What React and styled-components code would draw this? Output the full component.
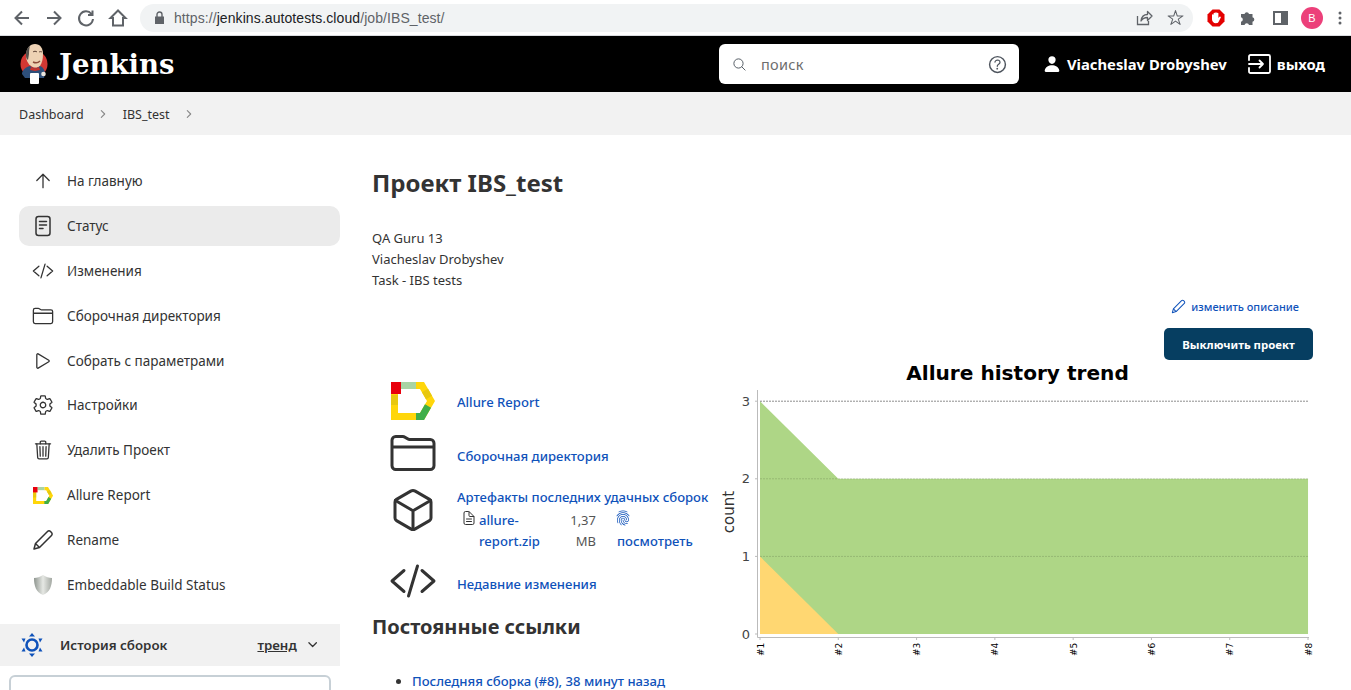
import styled, { createGlobalStyle } from "styled-components";
import {
  IoArrowUpOutline,
  IoChevronDown,
  IoChevronForward,
  IoCodeSlashOutline,
  IoCubeOutline,
  IoDocumentTextOutline,
  IoFingerPrintOutline,
  IoFolderOutline,
  IoHelpCircleOutline,
  IoPerson,
  IoPlayOutline,
  IoSearchOutline,
  IoSettingsOutline,
  IoStarOutline,
  IoTrashOutline,
} from "react-icons/io5";

const GlobalStyle = createGlobalStyle`
  html, body {
    margin: 0;
    padding: 0;
    height: 100%;
    overflow: hidden;
    background: #fff;
  }
  body {
    font-family: "Noto Sans", "Open Sans", sans-serif;
    font-size: 13px;
    color: #333;
  }
  * { box-sizing: border-box; }
`;

const Page = styled.div`
  height: 690px;
  overflow: hidden;
`;

/* browser chrome */
const Toolbar = styled.div`
  height: 36px;
  display: flex;
  align-items: center;
  padding-left: 12px;
  border-bottom: 1px solid #dadce0;
  color: #5f6368;
`;

const NavGroup = styled.div`
  display: flex;
  align-items: center;
  gap: 12px;
  width: 128px;

  svg { display: block; }
`;

const Omnibox = styled.div`
  flex: 1;
  height: 28px;
  border-radius: 14px;
  background: #f1f3f4;
  display: flex;
  align-items: center;
  padding: 0 9px 0 14px;
  margin-right: 7px;
  gap: 9px;
  font-family: "Liberation Sans", sans-serif;
  font-size: 14px;
`;

const Url = styled.span`
  flex: 1;
  color: #5f6368;
  letter-spacing: 0.08px;
  b { font-weight: 400; color: #202124; }
`;

const OmniIcons = styled.div`
  display: flex;
  align-items: center;
  gap: 14px;
  font-size: 17px;
  svg { display: block; }
`;

const ExtIcons = styled.div`
  display: grid;
  grid-template-columns: repeat(4, 32px) 23px;
  align-items: center;
  justify-items: center;
  svg { display: block; }
`;

const Avatar = styled.div`
  width: 22px;
  height: 22px;
  border-radius: 50%;
  background: #ec407a;
  color: #fff;
  font-family: "Liberation Sans", sans-serif;
  font-size: 11px;
  display: flex;
  align-items: center;
  justify-content: center;
`;

/* jenkins header */
const Header = styled.header`
  height: 56px;
  background: #000;
  display: flex;
  align-items: center;
  color: #fff;
  padding: 0 26px 0 19px;
`;

const Brand = styled.div`
  display: flex;
  align-items: center;
  gap: 10px;
  flex: 1;
  font-family: "DejaVu Serif", serif;
  font-weight: 700;
  font-size: 27.5px;
`;

const SearchBox = styled.div`
  width: 300px;
  height: 40px;
  border-radius: 6px;
  background: #fff;
  display: flex;
  align-items: center;
  padding: 0 10px 0 13px;
  color: #4d545d;
  margin-right: 24px;
  font-size: 14.5px;

  span {
    flex: 1;
    margin-left: 14px;
    color: #6d6d6d;
    letter-spacing: 0.3px;
  }
`;

const HeaderLink = styled.div`
  display: flex;
  align-items: center;
  gap: 6px;
  font-weight: 700;
  font-size: 14.8px;
  margin-right: ${(p) => p.$mr || 0}px;
  white-space: nowrap;
`;

const Crumbs = styled.nav`
  height: 43px;
  background: #f2f2f2;
  display: flex;
  align-items: center;
  padding: 1px 0 0 19px;
  font-size: 12.5px;
  color: #333;

  svg {
    margin: 0 14px 0 13px;
    color: #8a8a8a;
    font-size: 12px;
  }
`;

const Body = styled.div`
  display: flex;
`;

/* left column */
const Side = styled.aside`
  width: 340px;
  flex: none;
  padding-top: 26px;
`;

const Tasks = styled.div`
  margin: 0 0 19px 19px;
`;

const Task = styled.div`
  height: 40px;
  margin-bottom: 4.9px;
  border-radius: 10px;
  background: ${(p) => (p.$active ? "#ebebeb" : "transparent")};
  display: flex;
  align-items: center;
  font-size: 13.5px;
  color: #333;
`;

const TaskIcon = styled.span`
  width: 48px;
  flex: none;
  display: flex;
  justify-content: center;
  font-size: 22px;
  color: #333;

  svg { display: block; }
  ${(p) => p.$thin && "svg path, svg line, svg polyline, svg circle { stroke-width: 30; }"}
`;

const HistoryHead = styled.div`
  height: 42px;
  background: #f1f1f1;
  display: flex;
  align-items: center;
  padding: 0 21px 0 20px;
  font-size: 13.3px;

  strong {
    flex: 1;
    margin-left: 16px;
    font-weight: 600;
  }

  u {
    font-weight: 600;
    margin-right: 9px;
  }
`;

const Filter = styled.div`
  margin: 9px 9px 0;
  height: 40px;
  border: 2px solid #c7d0d6;
  border-radius: 6px;
  display: flex;
  align-items: center;
  padding: 0 7px;
  gap: 7px;
  color: #777;
  font-size: 13px;
`;

/* main */
const Main = styled.main`
  flex: 1;
  padding: 0 38px 0 32px;
  min-width: 0;
`;

const Title = styled.h1`
  margin: 30px 0 0;
  font-size: 24px;
  line-height: 36px;
  font-weight: 700;
  color: #333;
`;

const Description = styled.div`
  margin-top: 27px;
  line-height: 21px;
  font-size: 13px;
`;

const EditRow = styled.div`
  display: flex;
  justify-content: flex-end;
  align-items: center;
  gap: 5px;
  padding-right: 14px;
  margin-top: 5px;
  height: 21px;
  font-size: 11px;
  font-weight: 500;
  color: #0f52ba;
`;

const DisableRow = styled.div`
  display: flex;
  justify-content: flex-end;
  margin-top: 11px;
`;

const DisableButton = styled.button`
  width: 149px;
  height: 32px;
  border: none;
  border-radius: 5px;
  background: #063e61;
  color: #fff;
  font-family: inherit;
  font-size: 11.4px;
  font-weight: 700;
`;

const Columns = styled.div`
  display: flex;
`;

const Links = styled.div`
  width: 343px;
  flex: none;
  padding-top: 18px;
`;

const LinkRow = styled.div`
  display: grid;
  grid-template-columns: 48px 1fr;
  column-gap: 19px;
  margin-left: 18px;
  height: ${(p) => p.$h}px;
`;

const LinkIcon = styled.div`
  font-size: 48px;
  line-height: 0;
  color: #333;
  margin: ${(p) => p.$top || 0}px 0 0 ${(p) => p.$left || 0}px;
  svg { display: block; }
`;

const BlueLink = styled.a`
  color: #0f52ba;
  font-weight: 500;
  font-size: 13.1px;
  white-space: nowrap;
`;

const LinkText = styled.div`
  padding-top: ${(p) => p.$top}px;
  line-height: 21px;
`;

const Artifact = styled.div`
  display: grid;
  grid-template-columns: 22px 71px 46px 1fr;
  margin-top: 2px;
  line-height: 21px;
  font-size: 13px;
`;

const ArtifactIcon = styled.div`
  font-size: ${(p) => p.$size}px;
  padding-left: ${(p) => p.$left || 0}px;
  height: 21px;
  line-height: 0;
  color: ${(p) => p.$color || "#333"};
`;

const Size = styled.div`
  text-align: right;
  color: #555;
`;

const ViewLink = styled(BlueLink)`
  display: block;
  padding-left: 21px;
`;

const SubTitle = styled.h2`
  margin: 0;
  font-size: 20px;
  line-height: 30px;
  font-weight: 700;
  color: #333;
`;

const PermaList = styled.ul`
  margin: 29px 0 0;
  padding-left: 40px;
  line-height: 21px;
`;

/* drawings */
const Butler = () => (
  <svg width="30" height="40" viewBox="0 0 30 40">
    <circle cx="15" cy="20" r="13.5" fill="#d33833" />
    <path d="M7 12C7 4 11 0 16 0c5 0 8 4 8 10 0 5-1 9-3 12-2 2-6 2-9 0-3-2-5-6-5-10z" fill="#eed2b4" />
    <path d="M7 12C7 7 8 4 11 2c-1 3-1 6-1 8l-1 6c-1-1-2-2-2-4z" fill="#55504c" />
    <path d="M14 8c1-1 3-1 4 0M20 8c1-.5 2-.5 3 0" stroke="#5a4033" strokeWidth="1" fill="none" />
    <path d="M14 18c2 1 5 1 7-1" stroke="#8b4b3a" strokeWidth="1.4" fill="none" />
    <path d="M3 30c0-3 3-7 8-8l5 3 5-3c3 1 5 4 5 8l-1 4H6z" fill="#2e4f7a" />
    <path d="M12 23l4 2 4-2 1 3-5 1-5-1z" fill="#c8322d" />
    <circle cx="24.5" cy="30" r="2.3" fill="#e9e4dc" />
    <rect x="11" y="29" width="9" height="11" rx="1" fill="#fff" />
  </svg>
);

const AllureLogo = ({ width }) => (
  <svg width={width} viewBox="0 0 44 38" fill="none" strokeWidth="7" style={{ display: "block" }}>
    <path d="M3.5 4V34.5H31L40 19L31 3.5H25" stroke="#ffd60a" />
    <path d="M10 3.5H25" stroke="#a9d4a4" />
    <path d="M34 8.600L38 15.500" stroke="#e8c80f" />
    <path d="M37 24L31 34.500H25" stroke="#3fae49" />
    <path d="M3.500 13V23" stroke="#e8c80f" />
    <rect width="10" height="12" fill="#e8000d" stroke="none" />
  </svg>
);

const StatusIcon = () => (
  <svg width="22" height="22" viewBox="0 0 22 22" fill="none" stroke="#333" strokeWidth="1.5" strokeLinecap="round">
    <rect x="4" y="1.5" width="14" height="19" rx="2.5" />
    <path d="M7.500 6.500h7M7.500 10h7M7.500 13.500h3.500" />
  </svg>
);

const ShieldIcon = () => (
  <svg width="22" height="22" viewBox="0 0 22 22">
    <defs>
      <linearGradient id="shield" x1="0" x2="1" y1="0" y2="0">
        <stop offset="0" stopColor="#8f9690" />
        <stop offset="0.5" stopColor="#e6e8e4" />
        <stop offset="1" stopColor="#a3a8a2" />
      </linearGradient>
    </defs>
    <path d="M11 1c3 2 6 3 9 3 0 8-2 14-9 17C4 18 2 12 2 4c3 0 6-1 9-3z" fill="url(#shield)" />
  </svg>
);

const PencilIcon = ({ size, color }) => (
  <svg width={size} height={size} viewBox="0 0 22 22" fill="none" stroke={color} strokeLinejoin="round" strokeWidth="1.5">
    <path d="M2 20l1.500-5.500L15.500 2.500a2.100 2.100 0 0 1 3 0l1 1a2.100 2.100 0 0 1 0 3L7.500 18.500z" />
    <path d="M3.500 14.500l4 4" />
  </svg>
);

const HistoryIcon = () => (
  <svg width="24" height="24" viewBox="0 0 24 24" fill="#0f52ba">
    <circle cx="12" cy="12" r="5.5" fill="none" stroke="#0f52ba" strokeWidth="2.6" />
    <path d="M12 0l3 3.500H9zM12 24l-3-3.500h6zM1.500 5.500h4l-1.500 4zM22.500 5.500h-4l1.500 4zM1.500 18.500h4l-1.500-4zM22.500 18.500h-4l1.500-4z" />
  </svg>
);

const LogoutIcon = () => (
  <svg width="23" height="20" viewBox="0 0 23 20" fill="none" stroke="#fff" strokeWidth="1.8" strokeLinecap="round" strokeLinejoin="round">
    <path d="M1 6V2.500A1.500 1.500 0 0 1 2.500 1h18A1.500 1.500 0 0 1 22 2.500v15a1.500 1.500 0 0 1-1.500 1.500h-18A1.500 1.500 0 0 1 1 17.500V14" />
    <path d="M1 10h14M11.500 6.500L15 10l-3.500 3.500" />
  </svg>
);

const NavIcon = ({ d }) => (
  <svg width="20" height="20" viewBox="0 0 20 20" fill="none" stroke="#5f6368" strokeWidth="2">
    <path d={d} />
  </svg>
);

const ShareIcon = () => (
  <svg width="17" height="17" viewBox="0 0 17 17" fill="none" stroke="#5f6368" strokeWidth="1.3">
    <path d="M1.500 7v8.500h11V12" />
    <path d="M5 12c.5-4 3-6.500 6.500-6.500V2.500L16 7l-4.500 4.500V8.500C9 8.500 6.500 9.500 5 12z" strokeLinejoin="round" />
  </svg>
);

const StopIcon = () => (
  <svg width="18" height="18" viewBox="0 0 18 18">
    <path d="M5.500 .5h7l5 5v7l-5 5h-7l-5-5v-7z" fill="#e40000" />
    <path d="M5 9V6a.8.8 0 0 1 1.600 0V4.500a.8.8 0 0 1 1.600 0V4a.8.8 0 0 1 1.600 0v.5a.8.8 0 0 1 1.600 0V9l1-1.200a.8.8 0 0 1 1.300 1L11.500 13c-.5.800-1.200 1.200-2.500 1.200-2.500 0-4-1.700-4-4z" fill="#fff" />
  </svg>
);

const PuzzleIcon = () => (
  <svg width="16" height="16" viewBox="0 0 16 16" fill="#5f6368">
    <path d="M1 4h3.500a2.300 2.300 0 0 1 4.500 0H12.500v3.300a2.300 2.300 0 0 1 0 4.500V15H9a2.300 2.300 0 0 0-4.500 0H1v-3.300a2.300 2.300 0 0 0 0-4.500z" />
  </svg>
);

const SidebarIcon = () => (
  <svg width="15" height="14" viewBox="0 0 15 14">
    <path d="M0 0h15v14H0zM2 2v10h6V2z" fill="#5f6368" fillRule="evenodd" />
  </svg>
);

const Dots = () => (
  <svg width="4" height="14" viewBox="0 0 4 14" fill="#5f6368">
    <circle cx="2" cy="2" r="1.5" />
    <circle cx="2" cy="7" r="1.5" />
    <circle cx="2" cy="12" r="1.5" />
  </svg>
);

const LockIcon = () => (
  <svg width="11" height="13" viewBox="0 0 11 13" fill="#5f6368">
    <path d="M1 5.500h9V13H1z" />
    <path d="M3 6V3.500a2.500 2.500 0 0 1 5 0V6" fill="none" stroke="#5f6368" strokeWidth="1.4" />
  </svg>
);

const xAt = (i) => 45 + i * 78.29;
const yAt = (v) => 274 - v * 77.6;
const builds = [1, 2, 3, 4, 5, 6, 7, 8];

const TrendChart = () => (
  <svg width="598" height="330" viewBox="0 0 598 330" fontFamily="DejaVu Sans, sans-serif" style={{ display: "block" }}>
    <text x="302.5" y="20" textAnchor="middle" fontSize="20.1" fontWeight="700" fill="#000">
      Allure history trend
    </text>
    <polygon
      points={`${xAt(0)},${yAt(3)} ${xAt(1)},${yAt(2)} ${xAt(7)},${yAt(2)} ${xAt(7)},${yAt(0)} ${xAt(0)},${yAt(0)}`}
      fill="#aed686"
    />
    <polygon points={`${xAt(0)},${yAt(1)} ${xAt(1)},${yAt(0)} ${xAt(0)},${yAt(0)}`} fill="#ffd772" />
    {[1, 2, 3].map((v) => (
      <line
        key={v}
        x1={xAt(0)}
        x2={xAt(7)}
        y1={yAt(v)}
        y2={yAt(v)}
        stroke="#000"
        strokeOpacity={v === 3 ? 0.45 : 0.14}
        strokeDasharray="2 1"
      />
    ))}
    <path d="M42.5 30V277.5H594" fill="none" stroke="#bbb" strokeWidth="1" />
    {[0, 1, 2, 3].map((v) => (
      <g key={v}>
        <line x1="40" x2="42.5" y1={yAt(v)} y2={yAt(v)} stroke="#bbb" />
        <text x="35" y={yAt(v) + 4.5} textAnchor="end" fontSize="13" fill="#444">
          {v}
        </text>
      </g>
    ))}
    <text transform="translate(19 152) rotate(-90)" textAnchor="middle" fontSize="15" fill="#333">
      count
    </text>
    {builds.map((b, i) => (
      <g key={b}>
        <line x1={xAt(i)} x2={xAt(i)} y1="277.5" y2="280" stroke="#bbb" />
        <text transform={`translate(${xAt(i) + 3.5} 296) rotate(-90)`} fontSize="9" fill="#000">
          #{b}
        </text>
      </g>
    ))}
  </svg>
);

const tasks = [
  { label: "На главную", icon: <IoArrowUpOutline />, thin: true },
  { label: "Статус", icon: <StatusIcon />, active: true },
  { label: "Изменения", icon: <IoCodeSlashOutline />, thin: true },
  { label: "Сборочная директория", icon: <IoFolderOutline />, thin: true },
  { label: "Собрать с параметрами", icon: <IoPlayOutline />, thin: true },
  { label: "Настройки", icon: <IoSettingsOutline />, thin: true },
  { label: "Удалить Проект", icon: <IoTrashOutline />, thin: true },
  { label: "Allure Report", icon: <AllureLogo width={20} /> },
  { label: "Rename", icon: <PencilIcon size={22} color="#333" /> },
  { label: "Embeddable Build Status", icon: <ShieldIcon /> },
];

export default function App() {
  return (
    <Page>
      <GlobalStyle />
      <Toolbar>
        <NavGroup>
          <NavIcon d="M17 10H4M10 3.500L3.500 10l6.500 6.500" />
          <NavIcon d="M3 10h13M10 3.500l6.500 6.500-6.500 6.500" />
          <NavIcon d="M15.500 6A7 7 0 1 0 17 11M16.500 2.500V7h-4.500" />
          <NavIcon d="M10 2.500L2.500 10H5v7.500h10V10h2.500z" />
        </NavGroup>
        <Omnibox>
          <LockIcon />
          <Url>
            https://<b>jenkins.autotests.cloud</b>/job/IBS_test/
          </Url>
          <OmniIcons>
            <ShareIcon />
            <IoStarOutline />
          </OmniIcons>
        </Omnibox>
        <ExtIcons>
          <StopIcon />
          <PuzzleIcon />
          <SidebarIcon />
          <Avatar>В</Avatar>
          <Dots />
        </ExtIcons>
      </Toolbar>

      <Header>
        <Brand>
          <Butler />
          Jenkins
        </Brand>
        <SearchBox>
          <IoSearchOutline size={15} />
          <span>поиск</span>
          <IoHelpCircleOutline size={23} />
        </SearchBox>
        <HeaderLink $mr={21}>
          <IoPerson size={18} />
          Viacheslav Drobyshev
        </HeaderLink>
        <HeaderLink>
          <LogoutIcon />
          выход
        </HeaderLink>
      </Header>

      <Crumbs>
        Dashboard
        <IoChevronForward />
        IBS_test
        <IoChevronForward />
      </Crumbs>

      <Body>
        <Side>
          <Tasks>
            {tasks.map((t) => (
              <Task key={t.label} $active={t.active}>
                <TaskIcon $thin={t.thin}>{t.icon}</TaskIcon>
                {t.label}
              </Task>
            ))}
          </Tasks>
          <HistoryHead>
            <HistoryIcon />
            <strong>История сборок</strong>
            <u>тренд</u>
            <IoChevronDown />
          </HistoryHead>
          <Filter>
            <IoSearchOutline size={13} />
            Filter builds...
          </Filter>
        </Side>

        <Main>
          <Title>Проект IBS_test</Title>
          <Description>
            QA Guru 13
            <br />
            Viacheslav Drobyshev
            <br />
            Task - IBS tests
          </Description>
          <EditRow>
            <PencilIcon size={15} color="#0f52ba" />
            изменить описание
          </EditRow>
          <DisableRow>
            <DisableButton>Выключить проект</DisableButton>
          </DisableRow>
          <Columns>
            <Links>
              <LinkRow $h={53}>
                <LinkIcon $top={4} $left={1}>
                  <AllureLogo width={44} />
                </LinkIcon>
                <LinkText $top={14}>
                  <BlueLink>Allure Report</BlueLink>
                </LinkText>
              </LinkRow>
              <LinkRow $h={55}>
                <LinkIcon $top={-2} $left={-1}>
                  <IoFolderOutline />
                </LinkIcon>
                <LinkText $top={15}>
                  <BlueLink>Сборочная директория</BlueLink>
                </LinkText>
              </LinkRow>
              <LinkRow $h={73}>
                <LinkIcon $left={-1}>
                  <IoCubeOutline />
                </LinkIcon>
                <LinkText $top={1}>
                  <BlueLink>Артефакты последних удачных сборок</BlueLink>
                  <Artifact>
                    <ArtifactIcon $size={16} $left={4}>
                      <IoDocumentTextOutline />
                    </ArtifactIcon>
                    <BlueLink as="div">
                      allure-
                      <br />
                      report.zip
                    </BlueLink>
                    <Size>
                      1,37
                      <br />
                      MB
                    </Size>
                    <div>
                      <ArtifactIcon $size={16} $left={19} $color="#0f52ba">
                        <IoFingerPrintOutline />
                      </ArtifactIcon>
                      <ViewLink>посмотреть</ViewLink>
                    </div>
                  </Artifact>
                </LinkText>
              </LinkRow>
              <LinkRow $h={53}>
                <LinkIcon $top={-2} $left={-1}>
                  <IoCodeSlashOutline />
                </LinkIcon>
                <LinkText $top={15}>
                  <BlueLink>Недавние изменения</BlueLink>
                </LinkText>
              </LinkRow>
              <SubTitle>Постоянные ссылки</SubTitle>
              <PermaList>
                <li>
                  <BlueLink>Последняя сборка (#8), 38 минут назад</BlueLink>
                </li>
              </PermaList>
            </Links>
            <TrendChart />
          </Columns>
        </Main>
      </Body>
    </Page>
  );
}
